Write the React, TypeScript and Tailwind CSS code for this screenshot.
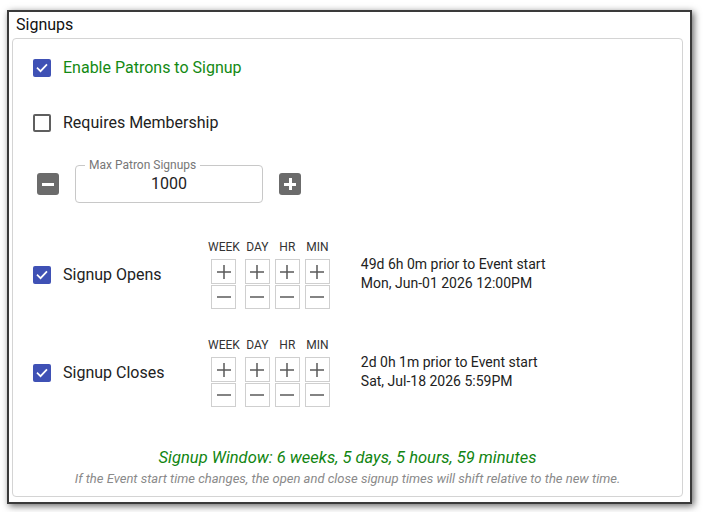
import React from 'react';

const font = { fontFamily: 'Roboto, "Noto Sans", sans-serif' };

function Check({ checked }: { checked: boolean }) {
  if (!checked) {
    return <span className="block w-[18px] h-[18px] rounded-[2px] border-2 border-[#5f5f5f] bg-white" />;
  }
  return (
    <span className="flex w-[18px] h-[18px] items-center justify-center rounded-[2px] bg-[#3f51b5]">
      <svg width="14" height="14" viewBox="0 0 24 24" fill="none" stroke="white" strokeWidth="3" strokeLinecap="square">
        <path d="M4.5 12.5l5 5L19.5 7" />
      </svg>
    </span>
  );
}

function Stepper() {
  const cols = ['WEEK', 'DAY', 'HR', 'MIN'];
  return (
    <div className="flex gap-[5px]">
      {cols.map((c) => (
        <div key={c} className="flex flex-col items-center min-w-[25px]">
          <div className="text-[12px] leading-[12px] text-[#333] mb-[6px]">{c}</div>
          <div className="flex flex-col gap-[1px]">
            <div className="flex w-[25px] h-[25px] items-center justify-center border border-[#cfcfcf]">
              <svg width="16" height="16" viewBox="0 0 16 16" stroke="#5a5a5a" strokeWidth="1.5">
                <path d="M1 8h14M8 1v14" />
              </svg>
            </div>
            <div className="flex w-[25px] h-[24px] items-center justify-center border border-[#cfcfcf]">
              <svg width="16" height="16" viewBox="0 0 16 16" stroke="#5a5a5a" strokeWidth="1.5">
                <path d="M1 8h14" />
              </svg>
            </div>
          </div>
        </div>
      ))}
    </div>
  );
}

function TimeRow({ label, rel, date }: { label: string; rel: string; date: string }) {
  return (
    <div className="flex items-center">
      <div className="flex w-[175px] items-center gap-[12px]">
        <Check checked />
        <span className="text-[16px] text-[#222]">{label}</span>
      </div>
      <Stepper />
      <div className="ml-[31px] mb-[2px] text-[14px] leading-[19px] text-[#222]">
        <div>{rel}</div>
        <div>{date}</div>
      </div>
    </div>
  );
}

export default function App() {
  return (
    <div className="w-[703px] h-[512px] bg-white pl-[7px] pt-[10px]" style={font}>
      <div className="w-[685px] h-[494px] border-2 border-[#3a3a3a] bg-white shadow-[2px_2px_7px_rgba(0,0,0,0.6)] pl-[3px] pr-[7px]">
        <div className="pl-[4px] pt-[3px] h-[24px] text-[16px] leading-[20px] text-[#111]">Signups</div>
        <div className="mt-[2px] h-[459px] rounded-[4px] border border-[#d4d4d4] px-[20px]">
          <div className="mt-[17px] flex h-[24px] items-center gap-[12px]">
            <Check checked />
            <span className="text-[16px] text-[#138a13]">Enable Patrons to Signup</span>
          </div>
          <div className="mt-[31px] flex h-[24px] items-center gap-[12px]">
            <Check checked={false} />
            <span className="text-[16px] text-[#222]">Requires Membership</span>
          </div>
          <div className="mt-[30px] flex items-center gap-[16px] pl-[4px]">
            <button className="flex w-[22px] h-[22px] items-center justify-center rounded-[3px] bg-[#6b6b6b]">
              <span className="block w-[12px] h-[3px] bg-white" />
            </button>
            <div className="relative flex w-[188px] h-[38px] items-center justify-center rounded-[4px] border border-[#c8c8c8]">
              <span className="absolute left-[9px] top-[-8px] bg-white px-[4px] text-[12px] leading-[14px] text-[#777]">
                Max Patron Signups
              </span>
              <span className="text-[16px] text-[#222]">1000</span>
            </div>
            <button className="relative flex w-[22px] h-[22px] items-center justify-center rounded-[3px] bg-[#6b6b6b]">
              <span className="block w-[12px] h-[3px] bg-white" />
              <span className="absolute block w-[3px] h-[12px] bg-white" />
            </button>
          </div>
          <div className="mt-[38px]">
            <TimeRow label="Signup Opens" rel="49d 6h 0m prior to Event start" date="Mon, Jun-01 2026 12:00PM" />
          </div>
          <div className="mt-[30px]">
            <TimeRow label="Signup Closes" rel="2d 0h 1m prior to Event start" date="Sat, Jul-18 2026 5:59PM" />
          </div>
          <div className="mt-[41px] -mx-[20px] text-center italic">
            <div className="text-[16.5px] leading-[20px] text-[#118511]">
              Signup Window: 6 weeks, 5 days, 5 hours, 59 minutes
            </div>
            <div className="mt-[2px] text-[13px] leading-[17px] text-[#8a8a8a]">
              If the Event start time changes, the open and close signup times will shift relative to the new time.
            </div>
          </div>
        </div>
      </div>
    </div>
  );
}
